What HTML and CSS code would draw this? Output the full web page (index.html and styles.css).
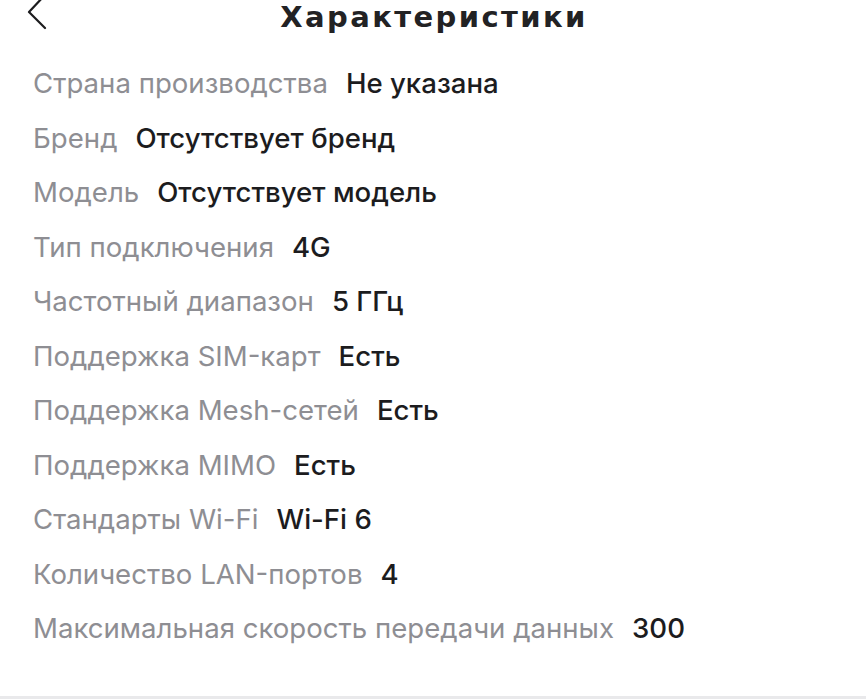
FILE: index.html
```html
<!DOCTYPE html>
<html lang="ru">
<head>
<meta charset="utf-8">
<link rel="stylesheet" href="styles.css">
</head>
<body>
<div class="page">
  <header class="header">
    <div class="back">
      <svg class="back-icon" width="24" height="40" viewBox="0 0 24 40">
        <polyline points="18,-4 3,12 19,28" fill="none" stroke="#1c1c1e" stroke-width="2.2" stroke-linecap="round" stroke-linejoin="round"/>
      </svg>
    </div>
    <h1 class="title">Характеристики</h1>
    <div></div>
  </header>
  <ul class="specs">
    <li class="row"><span class="label">Страна производства</span><span class="value">Не указана</span></li>
    <li class="row"><span class="label">Бренд</span><span class="value">Отсутствует бренд</span></li>
    <li class="row"><span class="label">Модель</span><span class="value">Отсутствует модель</span></li>
    <li class="row"><span class="label">Тип подключения</span><span class="value">4G</span></li>
    <li class="row"><span class="label">Частотный диапазон</span><span class="value">5 ГГц</span></li>
    <li class="row"><span class="label">Поддержка SIM-карт</span><span class="value">Есть</span></li>
    <li class="row"><span class="label">Поддержка Mesh-сетей</span><span class="value">Есть</span></li>
    <li class="row"><span class="label">Поддержка MIMO</span><span class="value">Есть</span></li>
    <li class="row"><span class="label">Стандарты Wi-Fi</span><span class="value">Wi-Fi 6</span></li>
    <li class="row"><span class="label">Количество LAN-портов</span><span class="value">4</span></li>
    <li class="row"><span class="label">Максимальная скорость передачи данных</span><span class="value">300</span></li>
  </ul>
  <div class="spacer"></div>
  <div class="bottom-bar"></div>
</div>
</body>
</html>
```

FILE: styles.css
```css
* { box-sizing: border-box; }
html, body { margin: 0; padding: 0; background: #fff; }
.page {
  width: 866px;
  height: 699px;
  overflow: hidden;
  display: flex;
  flex-direction: column;
  font-family: Inter, "Noto Sans", sans-serif;
}
.header {
  display: grid;
  grid-template-columns: 1fr auto 1fr;
  align-items: start;
  height: 40px;
}
.back { padding-left: 26px; height: 40px; }
.back-icon { display: block; }
.title {
  margin: 0;
  padding-left: 2px;
  font-family: "DejaVu Sans", sans-serif;
  font-size: 29px;
  line-height: 34px;
  font-weight: 700;
  color: #222224;
  letter-spacing: 2.4px;
}
.specs {
  list-style: none;
  margin: 16px 0 0 0;
  padding: 0 0 0 33px;
  display: flex;
  flex-direction: column;
}
.row {
  height: 54.5px;
  display: flex;
  align-items: center;
  gap: 18px;
  font-size: 27.6px;
}
.label { color: #8e8e93; }
.value { color: #1c1c1e; font-weight: 500; }
.spacer { flex: 1; }
.bottom-bar { height: 3px; background: #e9e9eb; }
```
